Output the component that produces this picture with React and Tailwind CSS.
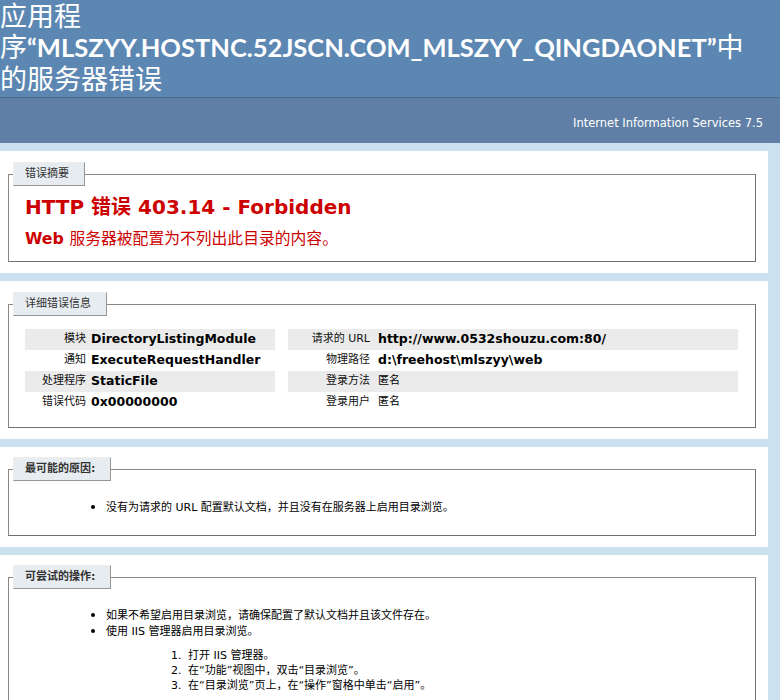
import React from "react";

const leftRows = [
  ["模块", "DirectoryListingModule"],
  ["通知", "ExecuteRequestHandler"],
  ["处理程序", "StaticFile"],
  ["错误代码", "0x00000000"],
];

const rightRows = [
  ["请求的 URL", "http://www.0532shouzu.com:80/", true],
  ["物理路径", "d:\\freehost\\mlszyy\\web", true],
  ["登录方法", "匿名", false],
  ["登录用户", "匿名", false],
];

const Legend = ({ children, bold }) => (
  <div
    className={`-mt-[13px] ml-[4px] w-fit h-[24px] pl-[11px] pr-[15px] leading-[22px] text-[11px] text-[#333333] bg-[#E7ECF0] border border-t-[#EDEDED] border-l-[#EDEDED] border-r-[#969696] border-b-[#969696] ${bold ? "font-bold" : "font-normal"}`}
  >
    {children}
  </div>
);

// white panel with the grey fieldset box inside
const Section = ({ title, bold, top = "pt-[23px]", children }) => (
  <div className={`bg-white pl-[8px] pr-[12px] pb-[11px] ${top}`}>
    <div className="border border-t-[#888888] border-l-[#888888] border-r-[#707070] border-b-[#707070]">
      <Legend bold={bold}>{title}</Legend>
      {children}
    </div>
  </div>
);

const DetailTable = ({ rows, labelW, gap }) => (
  <div className="flex flex-col">
    {rows.map(([label, value, strong], i) => (
      <div key={label} className={`flex items-center h-[21px] ${i % 2 === 0 ? "bg-[#EBEBEB]" : ""}`}>
        <div className={`shrink-0 text-right text-[11px] text-[#111111] ${labelW}`}>{label}</div>
        <div className={`whitespace-nowrap ${gap} ${strong === false ? "text-[11px] font-normal" : "text-[12.5px] font-bold"}`}>{value}</div>
      </div>
    ))}
  </div>
);

const Bullet = ({ children }) => <li className="[&::marker]:text-[14px]">{children}</li>;

export default function App() {
  return (
    <div className="min-h-screen bg-[#CBE1EF] text-black font-['DejaVu_Sans','Noto_Sans_CJK_SC',sans-serif] text-[11px] overflow-hidden">
      {/* HEADER */}
      <div className="bg-[#5C87B2] pb-[3px]">
        <h1 className="text-white text-[25.5px] leading-[31px] font-bold font-['Lato','Noto_Sans_CJK_SC',sans-serif] whitespace-nowrap">
          <span className="block font-normal text-[27px]">应用程</span>
          <span className="block">
            <span className="font-normal text-[27px]">序</span>“MLSZYY.HOSTNC.52JSCN.COM_MLSZYY_QINGDAONET”<span className="font-normal text-[27px]">中</span>
          </span>
          <span className="block font-normal text-[27px]">的服务器错误</span>
        </h1>
      </div>
      <div className="bg-[#5F7FA6] border-t border-[#4A6C8E] pt-[18px] pb-[13px] pr-[17px] text-right text-white text-[11.5px] leading-[14px]">
        Internet Information Services 7.5
      </div>

      {/* CONTENT */}
      <div className="flex flex-col gap-[8px] pt-[8px] pr-[12px]">
        <Section title="错误摘要">
          <h2 className="mt-[9px] pl-[16px] text-[20px] leading-[24px] font-bold text-[#CC0000] whitespace-nowrap">
            HTTP 错误 403.14 - Forbidden
          </h2>
          <h3 className="mt-[11px] pl-[16px] pb-[13px] text-[15.8px] leading-[18px] font-bold text-[#CC0000] whitespace-nowrap">
            Web <span className="font-normal">服务器被配置为不列出此目录的内容。</span>
          </h3>
        </Section>

        <Section title="详细错误信息">
          <div className="mt-[13px] mb-[14px] pl-[16px] pr-[17px] flex gap-[13px]">
            <div className="w-[250px] shrink-0">
              <DetailTable rows={leftRows} labelW="w-[61px]" gap="pl-[5px]" />
            </div>
            <div className="flex-1">
              <DetailTable rows={rightRows} labelW="w-[82px]" gap="pl-[8px]" />
            </div>
          </div>
        </Section>

        <Section title="最可能的原因:" bold top="pt-[22px]">
          <ul className="mt-[18px] pb-[20px] pl-[97px] list-disc text-[11px] leading-[15px]">
            <Bullet>没有为请求的 URL 配置默认文档，并且没有在服务器上启用目录浏览。</Bullet>
          </ul>
        </Section>

        <Section title="可尝试的操作:" bold top="pt-[22px]">
          <ul className="mt-[18px] pb-[40px] pl-[97px] list-disc text-[11px] leading-[15px]">
            <Bullet>如果不希望启用目录浏览，请确保配置了默认文档并且该文件存在。</Bullet>
            <Bullet>
              使用 IIS 管理器启用目录浏览。
              <ol className="mt-[9px] pl-[79px] list-decimal leading-[15px]">
                <li className="pl-[3px]">打开 IIS 管理器。</li>
                <li className="pl-[3px]">在“功能”视图中，双击“目录浏览”。</li>
                <li className="pl-[3px]">在“目录浏览”页上，在“操作”窗格中单击“启用”。</li>
              </ol>
            </Bullet>
          </ul>
        </Section>
      </div>
    </div>
  );
}
